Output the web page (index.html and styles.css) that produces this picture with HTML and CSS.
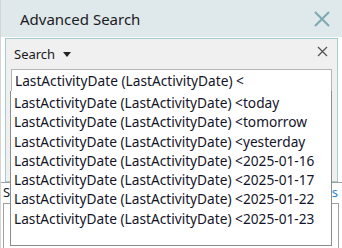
FILE: index.html
```html
<!DOCTYPE html>
<html lang="en">
<head>
    <meta charset="UTF-8">
    <title>Advanced Search</title>
    <link rel="stylesheet" href="styles.css">
</head>
<body>
    <div class="window">
        <div class="titlebar">
            <span class="title">Advanced Search</span>
            <svg class="close-big" width="18" height="18" viewBox="0 0 18 18">
                <path d="M2 2 L16 16 M16 2 L2 16" stroke="#7fa9b1" stroke-width="2"/>
            </svg>
        </div>
        <div class="panel">
            <div class="panel-head">
                <span class="search-label">Search</span>
                <svg class="caret" width="8" height="5" viewBox="0 0 8 5">
                    <path d="M0 0 H8 L4 5 Z" fill="#222"/>
                </svg>
                <svg class="close-small" width="11" height="11" viewBox="0 0 11 11">
                    <path d="M1 1 L10 10 M10 1 L1 10" stroke="#555" stroke-width="1.3"/>
                </svg>
            </div>
            <div class="query">LastActivityDate (LastActivityDate) &lt;</div>
        </div>
        <div class="results-head">
            <span class="label">S</span>
            <a class="link">s</a>
        </div>
        <div class="results"></div>

        <ul class="suggest">
            <li>LastActivityDate (LastActivityDate) &lt;today</li>
            <li>LastActivityDate (LastActivityDate) &lt;tomorrow</li>
            <li>LastActivityDate (LastActivityDate) &lt;yesterday</li>
            <li>LastActivityDate (LastActivityDate) &lt;2025-01-16</li>
            <li>LastActivityDate (LastActivityDate) &lt;2025-01-17</li>
            <li>LastActivityDate (LastActivityDate) &lt;2025-01-22</li>
            <li>LastActivityDate (LastActivityDate) &lt;2025-01-23</li>
        </ul>
    </div>
</body>
</html>
```

FILE: styles.css
```css
body {
    margin: 0;
    padding: 0;
    font-family: "Noto Sans", "Open Sans", sans-serif;
    background-color: #ffffff;
    color: #1a1a1a;
}

.window {
    position: relative;
    width: 342px;
    height: 248px;
    overflow: hidden;
    border-left: 1px solid #d4d4d4;
    box-sizing: border-box;
}

.titlebar {
    height: 37px;
    background-color: #dfe8eb;
    display: flex;
    align-items: center;
    justify-content: space-between;
    padding: 0 11px 0 19px;
}

.titlebar .title {
    font-size: 15px;
    color: #1b1b1b;
}

.panel {
    margin: 1px 4px 0 4px;
    height: 142px;
    border: 1px solid #a6cbd1;
    background-color: #f0f0f0;
    padding: 0 5px;
}

.panel-head {
    height: 30px;
    display: flex;
    align-items: center;
    padding-left: 3px;
}

.search-label {
    font-size: 13px;
}

.caret {
    margin-left: 8px;
}

.close-small {
    margin-left: auto;
    margin-right: 4px;
    margin-top: -6px;
}

.query {
    height: 22px;
    line-height: 22px;
    background-color: #ffffff;
    border: 1px solid #b4b4b4;
    font-size: 13.7px;
    padding-left: 3px;
    color: #141428;
}

.results-head {
    border-top: 1px solid #a0a0a0;
    height: 18px;
    display: flex;
    justify-content: space-between;
    align-items: center;
    padding: 0 4px 0 2px;
    font-size: 13px;
}

.results-head .link {
    color: #1c85d8;
}

.results {
    margin: 2px 3px 0 2px;
    height: 60px;
    border: 1px solid #a0a0a0;
    border-bottom: none;
}

.suggest {
    position: absolute;
    left: 9px;
    top: 91px;
    width: 322px;
    height: 155px;
    box-sizing: border-box;
    margin: 0;
    padding: 2px 0 0 3px;
    list-style: none;
    background-color: #ffffff;
    border: 1px solid #8c8c8c;
    border-top: none;
}

.suggest li {
    height: 19.3px;
    line-height: 19px;
    font-size: 13.7px;
    white-space: nowrap;
    color: #141428;
}
```
